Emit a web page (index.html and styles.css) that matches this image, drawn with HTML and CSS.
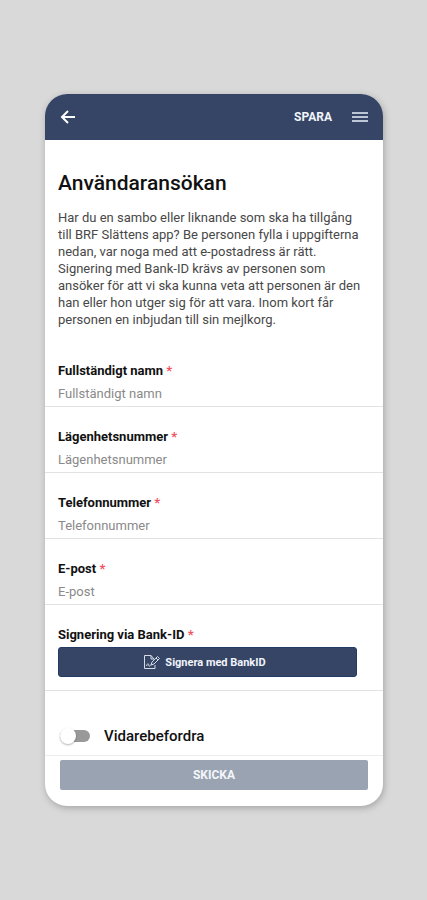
FILE: index.html
```html
<!DOCTYPE html>
<html lang="sv">
<head>
  <meta charset="UTF-8">
  <meta name="viewport" content="width=device-width, initial-scale=1.0">
  <title>Användaransökan</title>
  <link rel="stylesheet" href="styles.css">
</head>
<body>
  <div class="phone">
    <header class="topbar">
      <button type="button" class="icon-button" aria-label="Tillbaka">
        <svg class="icon-back" viewBox="0 0 16 16"><path d="M15 8H2M8 2L2 8l6 6"/></svg>
      </button>
      <button type="button" class="save">SPARA</button>
      <button type="button" class="icon-button" aria-label="Meny">
        <svg class="icon-menu" viewBox="0 0 16 12"><path d="M0 2h16M0 6h16M0 10h16"/></svg>
      </button>
    </header>

    <form>
      <div class="intro">
        <h1>Användaransökan</h1>
        <p>Har du en sambo eller liknande som ska ha tillgång till BRF Slättens app? Be personen fylla i uppgifterna nedan, var noga med att e-postadress är rätt. Signering med Bank-ID krävs av personen som ansöker för att vi ska kunna veta att personen är den han eller hon utger sig för att vara. Inom kort får personen en inbjudan till sin mejlkorg.</p>
      </div>

      <div class="field">
        <label for="namn">Fullständigt namn <span class="required">*</span></label>
        <input type="text" id="namn" placeholder="Fullständigt namn">
      </div>
      <div class="field">
        <label for="lagenhet">Lägenhetsnummer <span class="required">*</span></label>
        <input type="text" id="lagenhet" placeholder="Lägenhetsnummer">
      </div>
      <div class="field">
        <label for="telefon">Telefonnummer <span class="required">*</span></label>
        <input type="tel" id="telefon" placeholder="Telefonnummer">
      </div>
      <div class="field">
        <label for="epost">E-post <span class="required">*</span></label>
        <input type="email" id="epost" placeholder="E-post">
      </div>
      <div class="field signing">
        <label for="bankid">Signering via Bank-ID <span class="required">*</span></label>
        <button type="button" id="bankid" class="bankid">
          <svg class="icon-sign" viewBox="0 0 18 16"><path d="M12 11v3.500H1.500v-13H8L11 5M8 1.500V5h3M3.500 12c1-3 2-3 2.300-.500.300 1.200 1 .500 2-.500M8 11l1-3 5.500-5.500 2 2L11 10zM13 4l2 2"/></svg>
          Signera med BankID
        </button>
      </div>

      <label class="forward">
        <input type="checkbox" class="switch">
        Vidarebefordra
      </label>

      <footer class="bottom">
        <button type="submit" class="send" disabled>SKICKA</button>
      </footer>
    </form>
  </div>
</body>
</html>
```
FILE: styles.css
```css
* {
  box-sizing: border-box;
}
body {
  margin: 0;
  padding: 94px 44px 94px 45px;
  background-color: #d9d9d9;
  color: #111;
  font-family: Roboto, "Liberation Sans", sans-serif;
  font-size: 13px;
  line-height: 17px;
}
button, input {
  font-family: inherit;
  padding: 0;
  border: none;
}
svg {
  display: block;
  fill: none;
  stroke: currentColor;
}
.phone {
  overflow: hidden;
  background-color: #fff;
  border-radius: 22px;
  box-shadow: 1px 2px 7px rgba(0, 0, 0, 0.25);
}
.topbar {
  display: flex;
  align-items: center;
  height: 46px;
  padding: 0 15px;
  background-color: #364566;
  color: #fff;
}
.icon-button {
  background: none;
  color: inherit;
}
.icon-back {
  width: 16px;
  height: 16px;
  stroke-width: 2;
}
.icon-menu {
  width: 16px;
  height: 12px;
  stroke: #bcc6d6;
  stroke-width: 2;
}
.save {
  margin-left: auto;
  margin-right: 20px;
  background: none;
  color: #f1f4fa;
  font-size: 12px;
  font-weight: bold;
}
.intro {
  padding: 30px 18px 13px 13px;
}
h1 {
  margin: 0 0 13px;
  font-size: 21px;
  font-weight: 500;
  line-height: 26px;
}
p {
  margin: 0;
  color: #484848;
}
.field {
  display: flex;
  flex-direction: column;
  gap: 6px;
  padding: 21px 13px 4px;
  border-bottom: 1px solid #e2e2e2;
}
.field label {
  font-weight: bold;
}
.required {
  color: #f0525f;
}
.field input {
  width: 100%;
  height: 17px;
  background: none;
  font-size: 13px;
  outline: none;
}
.field input::placeholder {
  color: #8a8a8a;
}
.signing {
  gap: 4px;
  padding-right: 26px;
  padding-bottom: 13px;
}
.bankid {
  display: flex;
  align-items: center;
  justify-content: center;
  gap: 4px;
  height: 30px;
  padding-right: 6px;
  background-color: #364566;
  border: 1px solid #243a66;
  border-radius: 3px;
  color: #f1f4fa;
  font-size: 11px;
  font-weight: bold;
}
.icon-sign {
  width: 18px;
  height: 16px;
  stroke: #d5dbe6;
}
.forward {
  display: flex;
  align-items: center;
  gap: 14px;
  padding: 35px 15px 9px;
  font-size: 15px;
  font-weight: 500;
  line-height: 20px;
}
.switch {
  appearance: none;
  display: flex;
  align-items: center;
  width: 30px;
  height: 12px;
  margin: 0;
  background-color: #999;
  border-radius: 6px;
}
.switch::before {
  content: "";
  width: 16px;
  height: 16px;
  background-color: #fff;
  border-radius: 50%;
  box-shadow: 0 1px 2px rgba(0, 0, 0, 0.3);
}
.switch:checked {
  justify-content: flex-end;
  background-color: #364566;
}
.bottom {
  padding: 4px 15px 16px;
  border-top: 1px solid #ececec;
}
.send {
  display: block;
  width: 100%;
  height: 30px;
  background-color: #9aa3b2;
  border-radius: 2px;
  color: #f4f6fa;
  font-size: 12px;
  font-weight: bold;
}
```
